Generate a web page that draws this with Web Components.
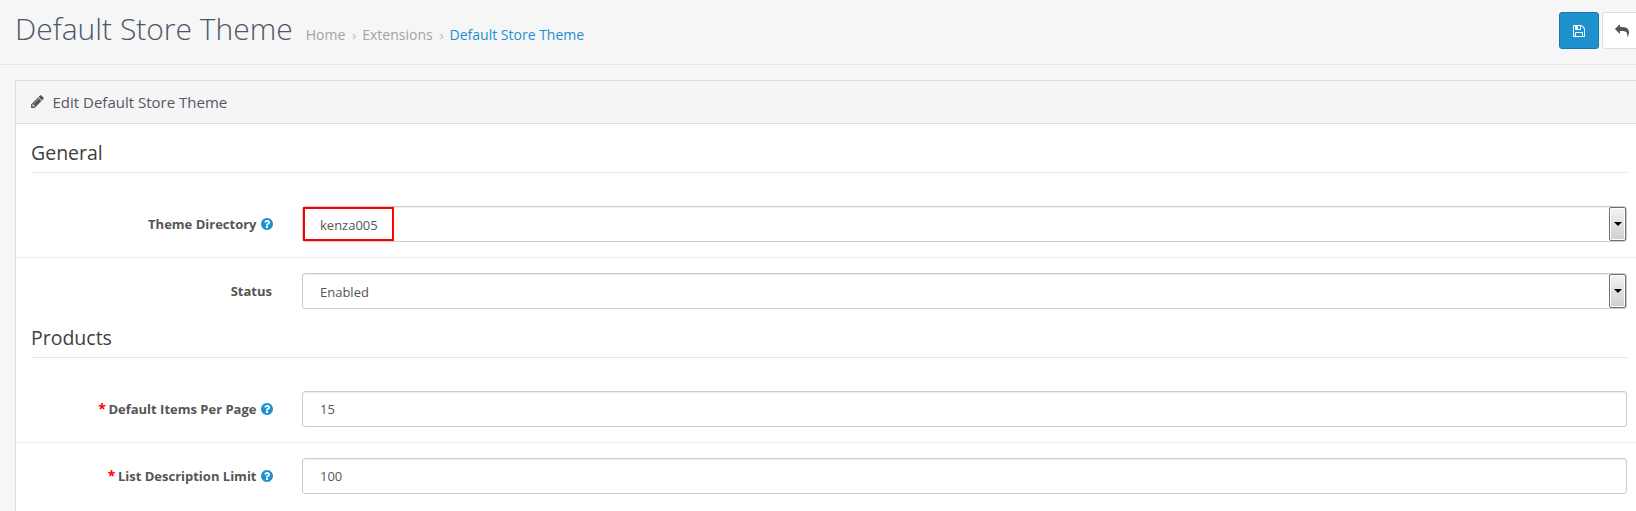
<!DOCTYPE html>
<html><head><meta charset="utf-8"><title>Default Store Theme</title>
<style>
html,body{margin:0;padding:0;background:#f6f6f6;overflow:hidden;width:1636px;height:511px}
body{font-family:"Open Sans",sans-serif;color:#555}
</style></head><body>
<page-header heading="Default Store Theme">
  <span slot="crumbs">Home</span>
  <span slot="crumbs">Extensions</span>
  <span slot="crumbs" data-active>Default Store Theme</span>
</page-header>
<edit-panel heading="Edit Default Store Theme">
  <form-legend>General</form-legend>
  <form-row label="Theme Directory" help><select-box highlight>kenza005</select-box></form-row>
  <form-row label="Status" last><select-box>Enabled</select-box></form-row>
  <form-legend>Products</form-legend>
  <form-row label="Default Items Per Page" help required><input-box>15</input-box></form-row>
  <form-row label="List Description Limit" help required last><input-box>100</input-box></form-row>
</edit-panel>
<script>
const ICONS={
pencil:'M491 1536l91-91-235-235-91 91v107h128v128h107zm523-928q0-22-22-22-10 0-17 7l-542 542q-7 7-7 17 0 22 22 22 10 0 17-7l542-542q7-7 7-17zm-54-192l416 416-832 832h-416v-416zm683 96q0 53-37 90l-166 166-416-416 166-165q36-38 90-38 53 0 91 38l235 234q37 39 37 91z',
save:'M512 1536h768v-384h-768v384zm896 0h128v-896q0-14-10-38.500t-20-34.500l-281-281q-10-10-34-20t-39-10v416q0 40-28 68t-68 28h-576q-40 0-68-28t-28-68v-416h-128v1280h128v-416q0-40 28-68t68-28h832q40 0 68 28t28 68v416zm-384-928v-320q0-13-9.500-22.500t-22.500-9.500h-192q-13 0-22.500 9.500t-9.500 22.500v320q0 13 9.500 22.500t22.500 9.500h192q13 0 22.500-9.500t9.500-22.500zm640 32v928q0 40-28 68t-68 28h-1344q-40 0-68-28t-28-68v-1344q0-40 28-68t68-28h928q40 0 88 20t76 48l280 280q28 28 48 76t20 88z',
reply:'M1792 1120q0 166-127 451-3 7-10.500 24t-13.500 30-13 22q-12 17-28 17-15 0-23.500-10t-8.500-25q0-9 2.500-26.500t2.500-23.500q5-68 5-123 0-101-17.500-181t-48.500-138.500-80-101-105.500-69.500-133-42.500-154-21.500-175.500-6h-224v256q0 26-19 45t-45 19-45-19l-512-512q-19-19-19-45t19-45l512-512q19-19 45-19t45 19 19 45v256h224q713 0 875 403 53 134 53 333z',
help:'M1024 1376v-192q0-14-9-23t-23-9h-192q-14 0-23 9t-9 23v192q0 14 9 23t23 9h192q14 0 23-9t9-23zm256-672q0-88-55.500-163t-138.500-116-170-41q-243 0-371 213-15 24 8 42l132 100q7 6 19 6 16 0 25-12 53-68 86-92 34-24 86-24 48 0 85.500 26t37.500 59q0 38-20 61t-68 45q-63 28-115.500 86.500t-52.500 125.500v36q0 14 9 23t23 9h192q14 0 23-9t9-23q0-19 21.500-49.500t54.500-49.500q32-18 49-28.500t46-35 44.500-48 28-60.500 12.500-81zm384 192q0 209-103 385.500t-279.500 279.500-385.500 103-385.500-103-279.500-279.500-103-385.500 103-385.500 279.500-279.500 385.500-103 385.500 103 279.500 279.500 103 385.500z'};
const svg=(n,s,c)=>`<svg width="${s}" height="${s}" viewBox="0 0 1792 1792" fill="${c}" style="display:block;flex:none"><path d="${ICONS[n]}"/></svg>`;
function define(name,render){customElements.define(name,class extends HTMLElement{constructor(){super();this.attachShadow({mode:'open'})}connectedCallback(){this.shadowRoot.innerHTML=render(this)}})}

customElements.define('page-header',class extends HTMLElement{
 constructor(){super();this.attachShadow({mode:'open'})}
 connectedCallback(){
  const crumbs=[...this.querySelectorAll('[slot=crumbs]')].map(c=>c.textContent);
  this.shadowRoot.innerHTML=`<style>
  :host{display:flex;height:64px;border-bottom:1px solid #e5e5e5;padding-left:15px;position:relative;white-space:nowrap;overflow:hidden}
  h1{margin:0 13px 0 0;font:300 30px/57px "Open Sans",sans-serif;color:#4c5666}
  nav{display:flex;font-size:14px;line-height:14px;color:#a3a3a3;padding-top:28px}
  .sep{margin:0 6px 0 7px;color:#b5b5b5;font-size:13px}
  .on{color:#1e91cf}
  .btns{position:absolute;left:1559px;top:12px;display:flex;gap:3px}
  button{box-sizing:border-box;width:40px;height:37px;border-radius:3px;border:1px solid #1978ab;background:#1e91cf;padding:0;display:flex;align-items:center;justify-content:center}
  button.w{background:#fff;border-color:#ddd}
  </style><h1>${this.getAttribute('heading')}</h1>
  <nav>${crumbs.map((c,i)=>`${i?'<span class="sep">›</span>':''}<span class="${i==crumbs.length-1?'on':''}">${c}</span>`).join('')}</nav>
  <div class="btns"><button>${svg('save',14,'#fff')}</button><button class="w">${svg('reply',14,'#555')}</button></div>`;
 }});

define('edit-panel',el=>`<style>
 :host{display:block;margin:15px 0 0 15px;height:431px;box-sizing:border-box;border:1px solid #ddd;border-right:0;border-bottom:0;background:#fff;overflow:hidden}
 header{box-sizing:border-box;height:43px;background:#f5f5f5;border-bottom:1px solid #ddd;display:flex;align-items:center;padding:0 0 1px 14px;font-size:15px;color:#555566;gap:7.5px}
 .body{padding-top:15px}
</style><header>${svg('pencil',15,'#555')}<span>${el.getAttribute('heading')}</span></header><div class="body"><slot></slot></div>`);

define('form-legend',el=>`<style>
 :host{display:block;width:1596px;margin:2px 0 18px 15px;font-size:19.5px;line-height:24px;color:#404040;padding-bottom:7px;border-bottom:1px solid #e5e5e5}
</style><slot></slot>`);

define('form-row',el=>{const l=el.getAttribute('label'),h=el.hasAttribute('help');return `<style>
 :host{display:grid;grid-template-columns:286px 1325px;padding:15px 0;${el.hasAttribute('last')?'':'border-bottom:1px solid #ededed;'}align-items:center}
 label{display:flex;justify-content:flex-end;align-items:center;gap:3px;padding-right:${h?28.5:30}px;font-size:13px;font-weight:700;color:#555}
 b{color:#f00;font-weight:700;font-size:14px;line-height:12px;margin-right:-.5px}
</style><label>${el.hasAttribute('required')?'<b>*</b>':''}<span>${l}</span>${h?svg('help',14,'#1e91cf'):''}</label><div><slot></slot></div>`});

define('input-box',()=>`<style>
 :host{display:block;box-sizing:border-box;height:36px;border:1px solid #ccc;border-radius:3px;background:#fff;padding:0 17px;font-size:13px;line-height:34px;color:#555;box-shadow:inset 0 1px 1px rgba(0,0,0,.075)}
</style><slot></slot>`);

define('select-box',el=>{const h=el.hasAttribute('highlight');return `<style>
 :host{display:flex;position:relative;box-sizing:border-box;height:36px;border:1px solid #ccc;border-radius:3px;background:#fff;padding:0 0 0 17px;font-size:13px;line-height:36px;color:#555;box-shadow:inset 0 1px 1px rgba(0,0,0,.075)}
 .t{flex:1}
 .arrow{width:17px;box-sizing:border-box;border:1px solid #6f6f6f;border-radius:2px;background:linear-gradient(#f3f3f3,#cfcfcf);box-shadow:inset 0 0 0 1px #fff;display:flex;align-items:center;justify-content:center}
 .arrow i{width:0;height:0;border:4px solid transparent;border-top:4px solid #000;border-bottom:0}
 .hl{position:absolute;left:0;top:0;width:91px;height:34px;box-sizing:border-box;border:2px solid #f00}
</style><span class="t"><slot></slot></span><span class="arrow"><i></i></span>${h?'<span class="hl"></span>':''}`});
</script>
</body></html>
